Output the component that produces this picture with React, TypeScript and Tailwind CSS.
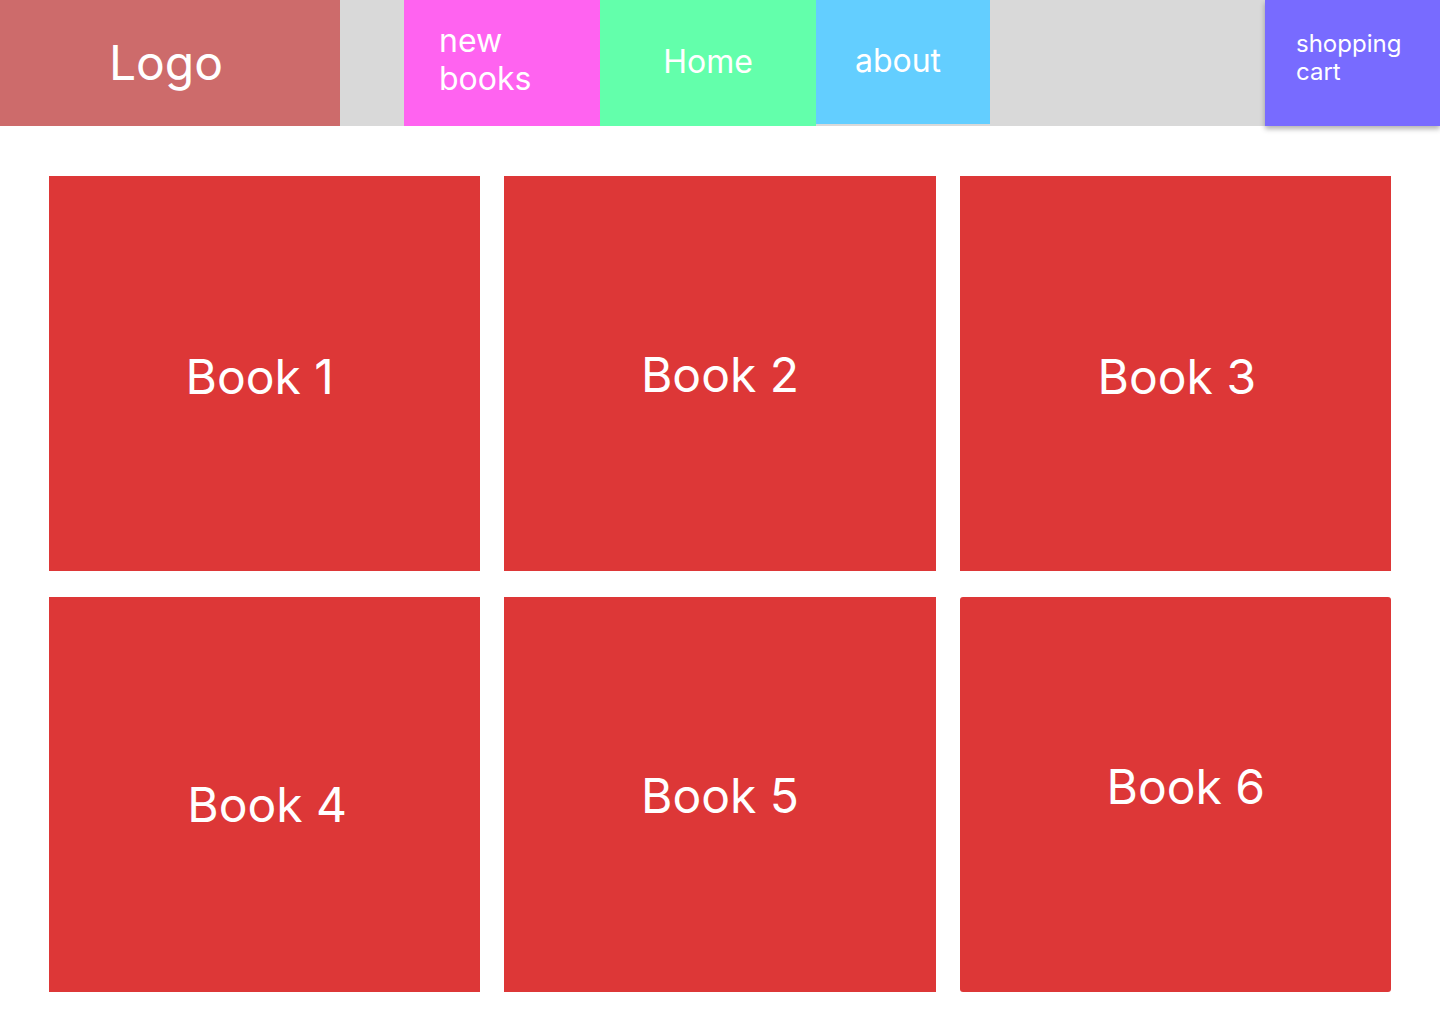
const books = [
  { title: "Book 1", offset: "pr-[10px] pt-[6px]" },
  { title: "Book 2", offset: "pt-[2px]" },
  { title: "Book 3", offset: "pl-[3px] pt-[6px]" },
  { title: "Book 4", offset: "pl-[5px] pt-[21px]" },
  { title: "Book 5", offset: "pt-[3px]" },
  { title: "Book 6", offset: "pl-[21px] pb-[15px]", rounded: true },
];

const Header = () => {
  return (
    <header className="flex h-[126px] w-full items-start bg-[#d9d9d9] font-['Inter',sans-serif] text-white">
      <div className="flex h-[126px] w-[340px] items-center justify-center bg-[#cd6b6b] pr-[8px] text-[48px] font-normal">
        Logo
      </div>
      <div className="ml-[64px] flex h-[126px] w-[196px] items-center bg-[#ff63f0] pb-[7px] pl-[35px] text-[32px] font-normal leading-[38px]">
        new
        <br />
        books
      </div>
      <div className="flex h-[126px] w-[216px] items-center justify-center bg-[#63ffab] pb-[3px] text-[32px] font-normal">
        Home
      </div>
      <div className="flex h-[124px] w-[174px] items-center justify-center bg-[#63ceff] pb-[3px] pr-[10px] text-[32px] font-normal">
        about
      </div>
      <div className="flex-1" />
      <div className="flex h-[126px] w-[175px] items-center bg-[#786bff] pb-[11px] pl-[31px] text-[24px] font-normal leading-[28px] shadow-[0_3px_5px_rgba(0,0,0,0.3)]">
        shopping
        <br />
        cart
      </div>
    </header>
  );
};

export default function App() {
  return (
    <div className="min-h-[1024px] w-full bg-white">
      <Header />
      <main className="grid grid-cols-3 gap-x-[24px] gap-y-[26px] px-[49px] pt-[50px]">
        {books.map((book) => (
          <div
            key={book.title}
            className={`flex h-[395px] items-center justify-center bg-[#dd3737] font-['Inter',sans-serif] text-[48px] font-normal text-white ${book.rounded ? "rounded-[3px]" : ""} ${book.offset}`}
          >
            {book.title}
          </div>
        ))}
      </main>
    </div>
  );
}
